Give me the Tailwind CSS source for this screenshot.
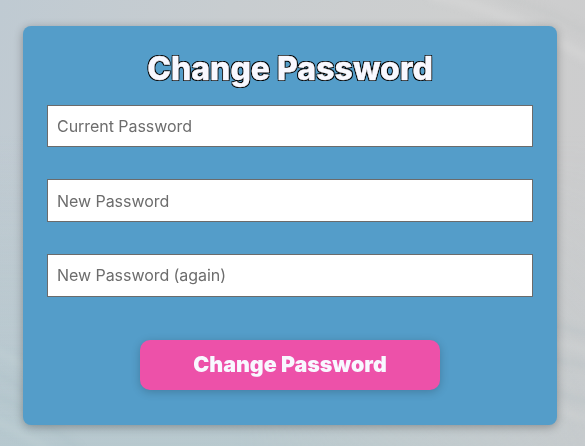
<!DOCTYPE html>
<html lang="en">
<head>
<meta charset="utf-8">
<title>Change Password</title>
<script src="https://cdn.jsdelivr.net/npm/@tailwindcss/browser@4"></script>
</head>
<body class="relative isolate h-[446px] overflow-hidden bg-[linear-gradient(100deg,#bfcad2_0%,#c8cdd0_35%,#cecfcf_70%,#cccccd_100%)] pl-[23px] pt-[26px] font-[Inter,sans-serif]">
  <svg class="absolute inset-0 -z-10" width="585" height="446" viewBox="0 0 585 446" fill="none" aria-hidden="true">
    <defs>
      <linearGradient id="tint" x1="0" y1="0" x2="0" y2="1"><stop offset=".3" stop-color="#b2c7ce" stop-opacity="0"/><stop offset="1" stop-color="#b2c7ce" stop-opacity=".75"/></linearGradient>
      <linearGradient id="fade"><stop offset=".4" stop-color="#fff"/><stop offset="1" stop-color="#fff" stop-opacity=".3"/></linearGradient>
      <mask id="fadeMask"><rect width="585" height="446" fill="url(#fade)"/></mask>
      <filter id="soft" x="-20%" y="-20%" width="140%" height="140%"><feGaussianBlur stdDeviation="3"/></filter>
    </defs>
    <rect width="585" height="446" fill="url(#tint)" mask="url(#fadeMask)"/>
    <g filter="url(#soft)">
      <path d="M430-5Q510 10 590 60" stroke="#d9d9d9" stroke-width="10" opacity=".45"/>
      <path d="M500-5Q550 10 590 35" stroke="#c4c5c6" stroke-width="8" opacity=".4"/>
      <path d="M550 324 590 334M550 359 590 366M550 391 590 403" stroke="#b7c1c4" stroke-width="4" opacity=".6"/>
      <path d="M550 342 590 350M550 408 590 420" stroke="#d5d7d8" stroke-width="6" opacity=".4"/>
      <path d="M-5 372Q15 382 30 396M-5 395Q25 405 80 450" stroke="#a6bcc4" stroke-width="4" opacity=".35"/>
      <path d="M-5 350Q15 360 30 370M-5 420 50 450" stroke="#c5d3d8" stroke-width="6" opacity=".35"/>
    </g>
  </svg>
  <main class="flex h-[399px] w-[534px] flex-col items-center rounded-lg bg-[#549dc9] px-6 pt-[23px] shadow-[0_2px_10px_rgba(0,0,0,0.3)]">
    <h1 class="text-[32px] leading-[40px] font-extrabold whitespace-nowrap text-[#f8f8ff] [-webkit-text-stroke:0.4px_#f8f8ff] [text-shadow:-1px_-1px_0_#000,1px_-1px_0_#000,-1px_1px_0_#000,1px_1px_0_#000]">Change Password</h1>
    <form class="mt-4 flex w-full flex-col items-center">
      <input class="h-[42px] w-full border border-[#6b6b6b] bg-white px-[9px] text-base tracking-[-0.05px] placeholder:text-[#6d6d6d]" type="password" placeholder="Current Password">
      <input class="mt-8 h-[43px] w-full border border-[#6b6b6b] bg-white px-[9px] text-base tracking-[-0.05px] placeholder:text-[#6d6d6d]" type="password" placeholder="New Password">
      <input class="mt-8 h-[43px] w-full border border-[#6b6b6b] bg-white px-[9px] pb-[2px] text-base tracking-[-0.05px] placeholder:text-[#6d6d6d]" type="password" placeholder="New Password (again)">
      <button class="mt-[43px] h-[50px] w-[300px] rounded-[10px] bg-[#ed51a9] pb-[2px] text-[21.4px] font-black text-[#f8f8ff] shadow-[0_2px_10px_rgba(0,0,0,0.2)]" type="button">Change Password</button>
    </form>
  </main>
</body>
</html>
